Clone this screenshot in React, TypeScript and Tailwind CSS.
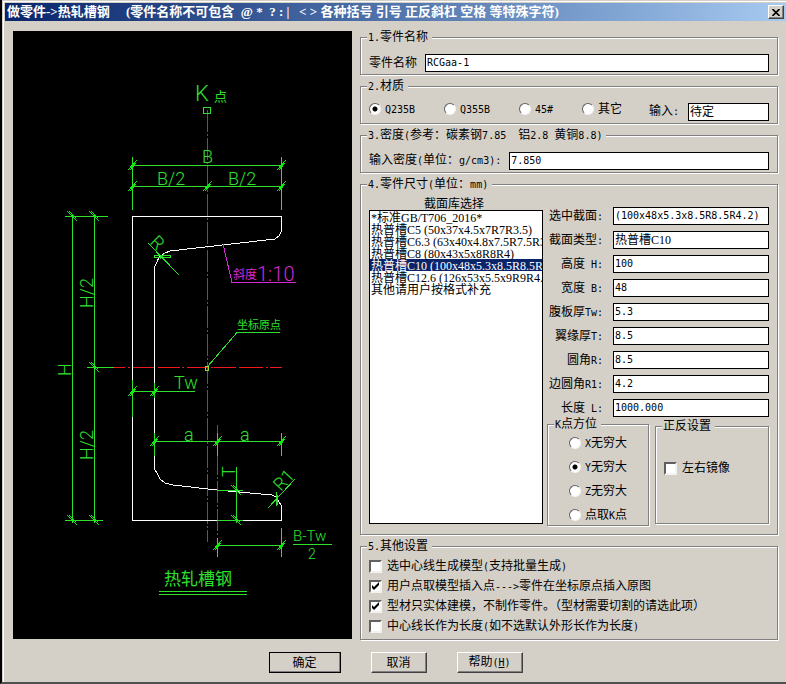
import { ReactNode, useState } from 'react';

const CJK = "font-['Liberation_Serif','Noto_Sans_CJK_SC',sans-serif]";
const MONO = "font-['DejaVu_Sans_Mono','Noto_Sans_CJK_SC',monospace]";

/** Sets half-width characters in a fixed-pitch face, half as wide as the Chinese ones. */
function Txt({ children }: { children: string }) {
  const parts = children.split(/([\x20-\x7e]+)/).filter(Boolean);
  return (
    <span className="whitespace-pre">
      {parts.map((part, i) =>
        /^[\x20-\x7e]/.test(part) ? (
          <span key={i} className={`text-[10px] ${MONO}`}>{part}</span>
        ) : (
          part
        ),
      )}
    </span>
  );
}

function Group({ title, className = '', children }: { title: string; className?: string; children: ReactNode }) {
  return (
    <fieldset
      className={`min-w-0 border border-[#808080] shadow-[1px_1px_0_#fff,inset_1px_1px_0_#fff] ${className}`}
    >
      <legend className="h-[15px] bg-[#d4d0c8] pr-1 pl-px leading-[15px]">
        <Txt>{title}</Txt>
      </legend>
      {children}
    </fieldset>
  );
}

function TextBox({ id, value, className = '' }: { id: string; value: string; className?: string }) {
  const plain = /^[\x20-\x7e]*$/.test(value);
  return (
    <input
      id={id}
      type="text"
      defaultValue={value}
      className={`h-[18px] w-full min-w-0 border border-black bg-white px-px pb-0.5 leading-[14px] text-black outline-none ${
        plain ? `text-[10px] ${MONO}` : `text-xs ${CJK}`
      } ${className}`}
    />
  );
}

function Radio({ name, label, checked }: { name: string; label: string; checked?: boolean }) {
  return (
    <label className="flex h-4 items-center gap-1 leading-4">
      <input
        type="radio"
        name={name}
        defaultChecked={checked}
        className="size-3 shrink-0 appearance-none rounded-full border border-t-[#606060] border-r-[#f4f2ee] border-b-[#f4f2ee] border-l-[#606060] bg-white checked:bg-[radial-gradient(circle,#000_2px,#fff_3px)]"
      />
      <Txt>{label}</Txt>
    </label>
  );
}

function Check({ label, checked }: { label: string; checked?: boolean }) {
  return (
    <label className="flex h-5 items-center gap-[5px]">
      <span className="grid shrink-0">
        <input
          type="checkbox"
          defaultChecked={checked}
          className="peer size-[13px] appearance-none border-2 border-t-[#606060] border-r-[#f4f2ee] border-b-[#f4f2ee] border-l-[#606060] bg-white [grid-area:1/1]"
        />
        <svg viewBox="0 0 13 13" className="pointer-events-none hidden size-[13px] [grid-area:1/1] peer-checked:block">
          <path d="M3 5v3l2 2 5-5V2L5 7z" fill="#000" />
        </svg>
      </span>
      <Txt>{label}</Txt>
    </label>
  );
}

const GREEN = '#2fe02f';

function Ticks({ at, back }: { at: [number, number][]; back?: boolean }) {
  const d = at
    .map(([x, y]) =>
      back
        ? `M${x - 5} ${y - 6}L${x + 5} ${y + 4}M${x - 3} ${y - 6}L${x + 4} ${y + 1}`
        : `M${x - 4} ${y + 4}L${x + 5} ${y - 6}M${x - 2} ${y + 4}L${x + 4} ${y - 3}`,
    )
    .join('');
  return <path d={d} stroke="#12e812" />;
}

function Diagram() {
  return (
    <svg
      viewBox="13 31 339 608"
      role="img"
      aria-label="热轧槽钢"
      className="mt-px h-[608px] w-[339px] shrink-0 bg-black font-['Roboto','Noto_Sans_CJK_SC',sans-serif] font-light"
      fill="none"
      shapeRendering="crispEdges"
    >
      <g fill="#f01818">
        {[110, 138, 166, 194, 222, 250, 278, 306, 334, 362, 390, 418, 446, 474, 502].map((y) => (
          <g key={y}>
            <rect x="207" y={y} width="1" height="22" />
            <rect x="207" y={y + 24} width="1" height="2" />
          </g>
        ))}
        <rect x="207" y="530" width="1" height="12" />
        {[425, 453, 481, 509].map((y) => (
          <g key={y}>
            <rect x="217" y={y} width="1" height="22" />
            <rect x="217" y={y + 24} width="1" height="2" />
          </g>
        ))}
        <rect x="114" y="367" width="11" height="1" />
        {[128, 158, 182, 211, 239, 266].map((x) => (
          <rect key={x} x={x} y="367" width="2" height="1" />
        ))}
        <rect x="132" y="367" width="23" height="1" />
        <rect x="158" y="367" width="22" height="1" />
        <rect x="187" y="367" width="22" height="1" />
        <rect x="214" y="367" width="22" height="1" />
        <rect x="241" y="367" width="22" height="1" />
        <rect x="270" y="367" width="12" height="1" />
      </g>
      <path
        stroke="#fff"
        d="M132.500 216.500H281.500V231L279 236L275 239L170 251L165 253L159 257L157 262L154.500 267V469L158 475L160 479L165 483L173 485L217 490L272 495L276 497L279 502L281.500 506V520.500H132.500Z"
      />
      <g stroke={GREEN}>
        <path d="M203.500 107.500H210.500V113.500H203.500Z" />
        <path d="M132.500 157V210M281.500 157V210M132 165.500H282M132 186.500H282" />
        <path d="M72.500 214V523M94.500 214V523M65 216.500H108M65 520.500H103M87 367.500H114" />
        <path d="M132.500 380V417M154.500 383V398M132 391.500H195" />
        <path d="M154.500 433V456M217.500 433V456M281.500 433V456M154 441.500H282" />
        <path d="M236.500 467V523M217 490.500H243M217 520.500H243" />
        <path d="M217.500 538V557M281.500 528V557M217 545.500H282" />
        <path d="M293 544.500H332M159 591.500H247M159 594.500H247" />
        <path d="M208 366L237 332.500H280M148 243L179 275M268 508L295 479" />
        <path d="M154.500 255.500H170.500V257.500H154.500ZM160 259L165 253M276.500 492V506M277.500 495V505M274 501L279 496" />
      </g>
      <path d="M205.500 366.500H208.500V370.500H205.500Z" stroke="#8ee02a" />
      <Ticks at={[[132, 166], [281, 166], [132, 187], [207, 187], [281, 187]]} />
      <Ticks at={[[132, 392], [154, 392], [154, 442], [217, 442], [281, 442], [217, 546], [281, 546]]} />
      <Ticks back at={[[72, 217], [94, 217], [94, 368], [72, 521], [94, 521], [236, 491], [236, 521]]} />
      <path d="M223 244L232 282.500H296" stroke="#d428d4" />
      <g fill={GREEN} fontSize="18">
        <text x="195" y="101" fontSize="22">K</text>
        <text x="214" y="101" fontSize="13" fontWeight="400">点</text>
        <text x="202" y="163">B</text>
        <text x="157" y="185">B/2</text>
        <text x="228" y="185">B/2</text>
        <text transform="translate(71 376) rotate(-90)">H</text>
        <text transform="translate(93 308) rotate(-90)">H/2</text>
        <text transform="translate(93 460) rotate(-90)">H/2</text>
        <text x="174" y="389">Tw</text>
        <text x="184" y="441">a</text>
        <text x="240" y="441">a</text>
        <text transform="translate(235 477) rotate(-90)">T</text>
        <text transform="translate(149 243) rotate(45)">R</text>
        <text transform="translate(281 492) rotate(-47)">R1</text>
        <text x="237" y="329" fontSize="11" fontWeight="400">坐标原点</text>
        <text x="293" y="541" fontSize="15">B-Tw</text>
        <text x="308" y="559" fontSize="14">2</text>
        <text x="164" y="585" fontSize="17" fontWeight="400">热轧槽钢</text>
      </g>
      <g fill="#d428d4">
        <text x="233" y="279" fontSize="12" fontWeight="400">斜度</text>
        <text x="257" y="281" fontSize="20">1:10</text>
      </g>
    </svg>
  );
}

const SECTIONS = [
  '*标准GB/T706_2016*',
  '热普槽C5 (50x37x4.5x7R7R3.5)',
  '热普槽C6.3 (63x40x4.8x7.5R7.5R3.8)',
  '热普槽C8 (80x43x5x8R8R4)',
  '热普槽C10 (100x48x5.3x8.5R8.5R4.2)',
  '热普槽C12.6 (126x53x5.5x9R9R4.5)',
  '其他请用户按格式补充',
];

const DIMENSIONS = [
  ['sel', '选中截面:', '(100x48x5.3x8.5R8.5R4.2)'],
  ['type', '截面类型:', '热普槽C10'],
  ['h', '高度 H:', '100'],
  ['b', '宽度 B:', '48'],
  ['tw', '腹板厚Tw:', '5.3'],
  ['t', '翼缘厚T:', '8.5'],
  ['r', '圆角R:', '8.5'],
  ['r1', '边圆角R1:', '4.2'],
  ['l', '长度 L:', '1000.000'],
];

const BUTTON =
  'h-[21px] border border-t-white border-r-[#404040] border-b-[#404040] border-l-white bg-[#d4d0c8] leading-4 shadow-[inset_-1px_-1px_0_#808080]';

export default function App() {
  const [section, setSection] = useState(SECTIONS[4]);
  return (
    <div className={`border-b-2 border-l-2 border-b-[#505050] border-l-black bg-[#d4d0c8] pt-px pl-px text-xs text-black ${CJK}`}>
      <div className="border-t border-l border-white pt-px pl-px">
        <header className="flex h-[18px] items-center justify-between bg-linear-to-r from-[#0a246a] to-[#a6caf0] pr-0.5 pl-0.5">
          <h1 className="text-[13px] leading-4 font-bold whitespace-pre text-white">
            {'做零件->热轧槽钢     (零件名称不可包含  @ *  ? : |   < > 各种括号 引号 正反斜杠 空格 等特殊字符)'}
          </h1>
          <button
            type="button"
            aria-label="关闭"
            className="flex h-3.5 w-4 items-center justify-center border border-t-white border-r-[#404040] border-b-[#404040] border-l-white bg-[#d4d0c8] shadow-[inset_-1px_-1px_0_#808080]"
          >
            <svg viewBox="0 0 8 7" className="h-[7px] w-2">
              <path d="M0.500 0L7.500 7M7.500 0L0.500 7" stroke="#000" strokeWidth="1.600" />
            </svg>
          </button>
        </header>

        <main className="flex gap-2 pt-[9px] pr-2 pl-2">
          <Diagram />
          <div className="flex min-w-0 flex-1 flex-col gap-1">
            <Group title="1.零件名称" className="px-1.5 pb-0.5">
              <div className="flex items-center gap-2 px-0.5 pt-[9px]">
                <label htmlFor="name" className="shrink-0 leading-4">零件名称</label>
                <TextBox id="name" value="RCGaa-1" />
              </div>
            </Group>

            <Group title="2.材质" className="px-1.5 pb-0.5">
              <div className="grid grid-cols-[75px_75px_63px_67px_39px_1fr] items-end px-0.5 pt-[7px]">
                <div className="self-start"><Radio name="material" label="Q235B" checked /></div>
                <div className="self-start"><Radio name="material" label="Q355B" /></div>
                <div className="self-start"><Radio name="material" label="45#" /></div>
                <div className="self-start"><Radio name="material" label="其它" /></div>
                <label htmlFor="material-text" className="h-[18px] leading-4"><Txt>输入:</Txt></label>
                <TextBox id="material-text" value="待定" className="mt-0.5" />
              </div>
            </Group>

            <Group title="3.密度(参考：碳素钢7.85  铝2.8 黄铜8.8)" className="px-1.5 pb-0.5">
              <div className="flex items-center gap-2 px-0.5 pt-[9px]">
                <label htmlFor="density" className="h-[18px] shrink-0 leading-4"><Txt>输入密度(单位：g/cm3):</Txt></label>
                <TextBox id="density" value="7.850" />
              </div>
            </Group>

            <Group title="4.零件尺寸(单位：mm)" className="px-1.5 pb-2">
              <div className="flex gap-1 px-0.5">
                <div className="flex w-[174px] shrink-0 flex-col pt-1.5">
                  <label htmlFor="library" className="pr-1 text-center leading-3">截面库选择</label>
                  <select
                    id="library"
                    size={7}
                    value={section}
                    onChange={(e) => setSection(e.target.value)}
                    className="h-[314px] w-full appearance-none overflow-hidden rounded-none border border-black bg-white p-0 text-xs outline-none"
                  >
                    {SECTIONS.map((s) => (
                      <option
                        key={s}
                        value={s}
                        className="-mt-[3px] -mb-[5px] h-[17px] min-h-0 p-0 px-px whitespace-pre checked:bg-transparent! checked:bg-[linear-gradient(transparent_3px,#0a246a_3px,#0a246a_15px,transparent_15px)] checked:text-white!"
                      >
                        {s}
                      </option>
                    ))}
                  </select>
                </div>
                <div className="min-w-0 flex-1 pt-[15px]">
                  <div className="flex flex-col gap-1.5">
                    {DIMENSIONS.map(([id, label, value]) => (
                      <div key={id} className="grid h-[18px] grid-cols-[56px_1fr] items-center gap-2.5">
                        <label htmlFor={id} className="flex h-[18px] justify-end leading-[18px]"><Txt>{label}</Txt></label>
                        <TextBox id={id} value={value} />
                      </div>
                    ))}
                  </div>
                  <div className="flex items-start gap-1.5">
                    <Group title="K点方位" className="h-[109px] w-[102px] shrink-0 px-1.5">
                      <div className="flex flex-col gap-2 pt-[3px] pl-[15px]">
                        <Radio name="kdir" label="X无穷大" />
                        <Radio name="kdir" label="Y无穷大" checked />
                        <Radio name="kdir" label="Z无穷大" />
                        <Radio name="kdir" label="点取K点" />
                      </div>
                    </Group>
                    <Group title="正反设置" className="mt-0.5 h-[105px] flex-1 px-1.5">
                      <div className="px-0.5 pt-6">
                        <Check label="左右镜像" />
                      </div>
                    </Group>
                  </div>
                </div>
              </div>
            </Group>

            <Group title="5.其他设置" className="px-1.5 pb-[3px]">
              <div className="px-0.5 pt-0.5">
                <Check label="选中心线生成模型(支持批量生成)" />
                <Check label="用户点取模型插入点--->零件在坐标原点插入原图" checked />
                <Check label="型材只实体建模，不制作零件。（型材需要切割的请选此项）" checked />
                <Check label="中心线长作为长度(如不选默认外形长作为长度)" />
              </div>
            </Group>
          </div>
        </main>

        <footer className="flex justify-center gap-[30px] pt-3 pb-[9px]">
          <button type="button" className={`${BUTTON} w-[72px] outline outline-black -outline-offset-1`}>确定</button>
          <button type="button" className={`${BUTTON} w-14`}>取消</button>
          <button type="button" className={`${BUTTON} w-[66px]`}>
            帮助<span className={`text-[10px] ${MONO}`}>(<u>H</u>)</span>
          </button>
        </footer>
      </div>
    </div>
  );
}
